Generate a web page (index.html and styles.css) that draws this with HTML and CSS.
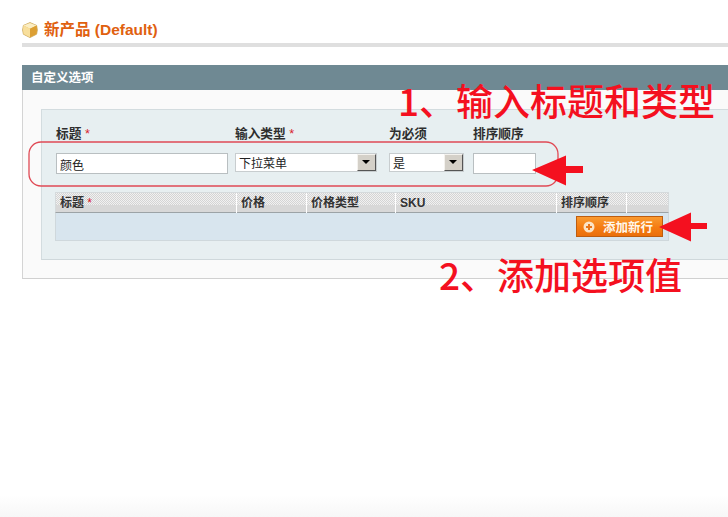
FILE: index.html
```html
<!DOCTYPE html>
<html lang="zh-CN">
<head>
<meta charset="utf-8">
<title>新产品 (Default)</title>
<link rel="stylesheet" href="styles.css">
</head>
<body>
<main class="page">
  <header class="head">
    <svg class="box" viewBox="0 0 16 16" width="16" height="16"><path d="M8 .6 14.6 3.4 15.4 8 14.6 12.2 8 15.6 1.4 12.2.6 8 1.4 3.4z" fill="#e8b94c" stroke="#c9a75e" stroke-width=".8" stroke-linejoin="round"/><path d="M1.4 3.6 8 6.8 14.6 3.6 8 .9z" fill="#fbeec4"/><path d="M8 6.8v8.4L1.6 12 1 8 1.4 3.6z" fill="#f8df9c"/><path d="M8 6.8 14.6 3.6 15 8 14.4 12 8 15.2z" fill="#dc9f33"/></svg>
    <h1>新产品 (Default)</h1>
  </header>
  <section class="panel">
    <h2>自定义选项</h2>
    <div class="panel-body">
      <div class="inner">
        <div class="fields">
          <div class="field f-title"><label>标题 <em>*</em></label><input class="text" value="颜色"></div>
          <div class="field f-type"><label>输入类型 <em>*</em></label><div class="select"><span>下拉菜单</span><i class="drop"></i></div></div>
          <div class="field f-req"><label>为必须</label><div class="select"><span>是</span><i class="drop"></i></div></div>
          <div class="field f-sort"><label>排序顺序</label><input class="text"></div>
        </div>
        <div class="table">
          <div class="thead">
            <div>标题 <em>*</em></div><div>价格</div><div>价格类型</div><div>SKU</div><div>排序顺序</div><div></div>
          </div>
          <div class="tbody">
            <button class="add"><svg viewBox="0 0 12 12" width="12" height="12"><circle cx="6" cy="6" r="5.5" fill="#fbe3c6"/><path d="M6 3v6M3 6h6" stroke="#e8751a" stroke-width="2"/></svg>添加新行</button>
          </div>
        </div>
      </div>
    </div>
  </section>
</main>
<svg class="ring" width="532" height="46" viewBox="0 0 532 46"><rect x="1" y="1" width="529" height="44" rx="12" fill="none" stroke="#e04a55" stroke-width="1.3"/></svg>
<svg class="arrow a1" width="52" height="31" viewBox="0 0 52 31"><path d="M0 15 34 .5V11H51V18H34V30.5z" fill="#f4101f"/></svg>
<svg class="arrow a2" width="49" height="30" viewBox="0 0 49 30"><path d="M0 15 32 .5V11H48V17H32V29.5z" fill="#f4101f"/></svg>
<p class="note n1">1、输入标题和类型</p>
<p class="note n2">2、添加选项值</p>
<div class="fade"></div>
</body>
</html>
```
FILE: styles.css
```css
* { box-sizing: border-box; }
html, body { margin: 0; height: 517px; overflow: hidden; background: #fff; }
body { position: relative; font-family: "Liberation Sans", "Noto Sans CJK SC", sans-serif; font-size: 12px; color: #2f2f2f; }
.page { padding: 19px 0 0 22px; }
.head { position: relative; display: flex; align-items: center; gap: 6px; height: 22px; }
.head::after { content: ""; position: absolute; left: 0; right: 0; top: 24px; height: 4px; background: #dfdfdf; }
.box { display: block; flex: none; }
h1 { margin: 0; font-size: 15.5px; line-height: 18px; font-weight: bold; color: #e0600f; white-space: nowrap; }
.panel { margin-top: 24px; }
h2 { margin: 0; height: 25px; padding-left: 9px; background: #6f8993; color: #fff; font-size: 12.5px; line-height: 26px; font-weight: bold; }
.panel-body { height: 189px; padding: 19px 0 0 18px; background: #fafafa; border-left: 1px solid #d4d4d4; border-bottom: 1px solid #d0d0d0; }
.inner { height: 151px; padding: 15px 0 0 14px; background: #e7eff1; border-left: 1px solid #d3dcdf; border-top: 1px solid #d3dcdf; border-bottom: 1px solid #cfd8db; }
.fields { display: flex; height: 67px; }
.field { display: flex; flex-direction: column; gap: 10px; }
.field label { font-size: 12.7px; font-weight: bold; line-height: 18px; height: 18px; white-space: nowrap; color: #2e2e2e; }
em { color: #d8202c; font-style: normal; font-weight: normal; }
.f-title { width: 179px; }
.f-type { width: 154px; }
.f-req { width: 84px; }
.f-sort { width: 63px; }
.text { width: 172px; height: 21px; padding: 1px 3px 0; border: 1px solid #b9bfc1; background: #fff; font: 12px "Liberation Sans", "Noto Sans CJK SC", sans-serif; color: #222; outline: none; }
.f-sort .text { width: 63px; }
.select { display: flex; align-items: center; justify-content: space-between; height: 19px; padding: 0 0 0 3px; background: #fff; border: 1px solid #c8cdcf; color: #222; }
.f-type .select { width: 142px; }
.f-req .select { width: 75px; }
.drop { position: relative; flex: none; width: 19px; height: 17px; background: #d4d0c8; border: 1px solid; border-color: #f4f2ee #555 #555 #f4f2ee; }
.drop::after { content: ""; position: absolute; left: 4px; top: 5px; border: 4px solid transparent; border-top: 4px solid #000; border-bottom: 0; }
.table { width: 614px; margin-left: -1px; }
.thead { position: relative; display: grid; grid-template-columns: 181px 70px 89px 161px 70px 1fr; height: 21px; border: 1px solid #d5dadc; border-bottom: 1px solid #9ca3a6; background-color: #dcdcdc; background-image: repeating-conic-gradient(#d4d4d4 0 25%, #f1f1f1 0 50%); background-size: 2px 2px; }
.thead::after { content: ""; position: absolute; left: 0; right: 0; bottom: 0; height: 7px; background: #d8d8d8; }
.thead div { position: relative; z-index: 1; padding-left: 4px; font-size: 12px; font-weight: bold; line-height: 20px; color: #333; border-right: 1px solid #fff; white-space: nowrap; }
.thead div:last-child { border-right: 0; }
.tbody { display: flex; justify-content: flex-end; height: 28px; padding: 3px 5px 0 0; background: #d8e5ee; border: 1px solid #cfd8dc; border-top: 0; }
.add { display: flex; align-items: center; gap: 8px; width: 87px; height: 21px; padding: 0 0 0 6px; border: 1px solid #bd5d10; background: linear-gradient(#f99a30, #f57c12 55%, #ea6f0c); color: #fff7ea; font: bold 12.5px "Liberation Sans", "Noto Sans CJK SC", sans-serif; white-space: nowrap; }
.ring { position: absolute; left: 28px; top: 141px; }
.arrow { position: absolute; display: block; }
.a1 { left: 532px; top: 155px; }
.a2 { left: 659px; top: 212px; }
.note { position: absolute; margin: 0; color: #f4101f; font-family: "Noto Sans CJK SC", sans-serif; font-size: 37px; line-height: 40px; font-weight: 500; white-space: nowrap; }
.n1 { left: 398px; top: 80px; }
.n2 { left: 439px; top: 254px; }
.fade { position: absolute; left: 0; right: 0; bottom: 0; height: 22px; background: linear-gradient(#fff, #f7f7f7); }
```
